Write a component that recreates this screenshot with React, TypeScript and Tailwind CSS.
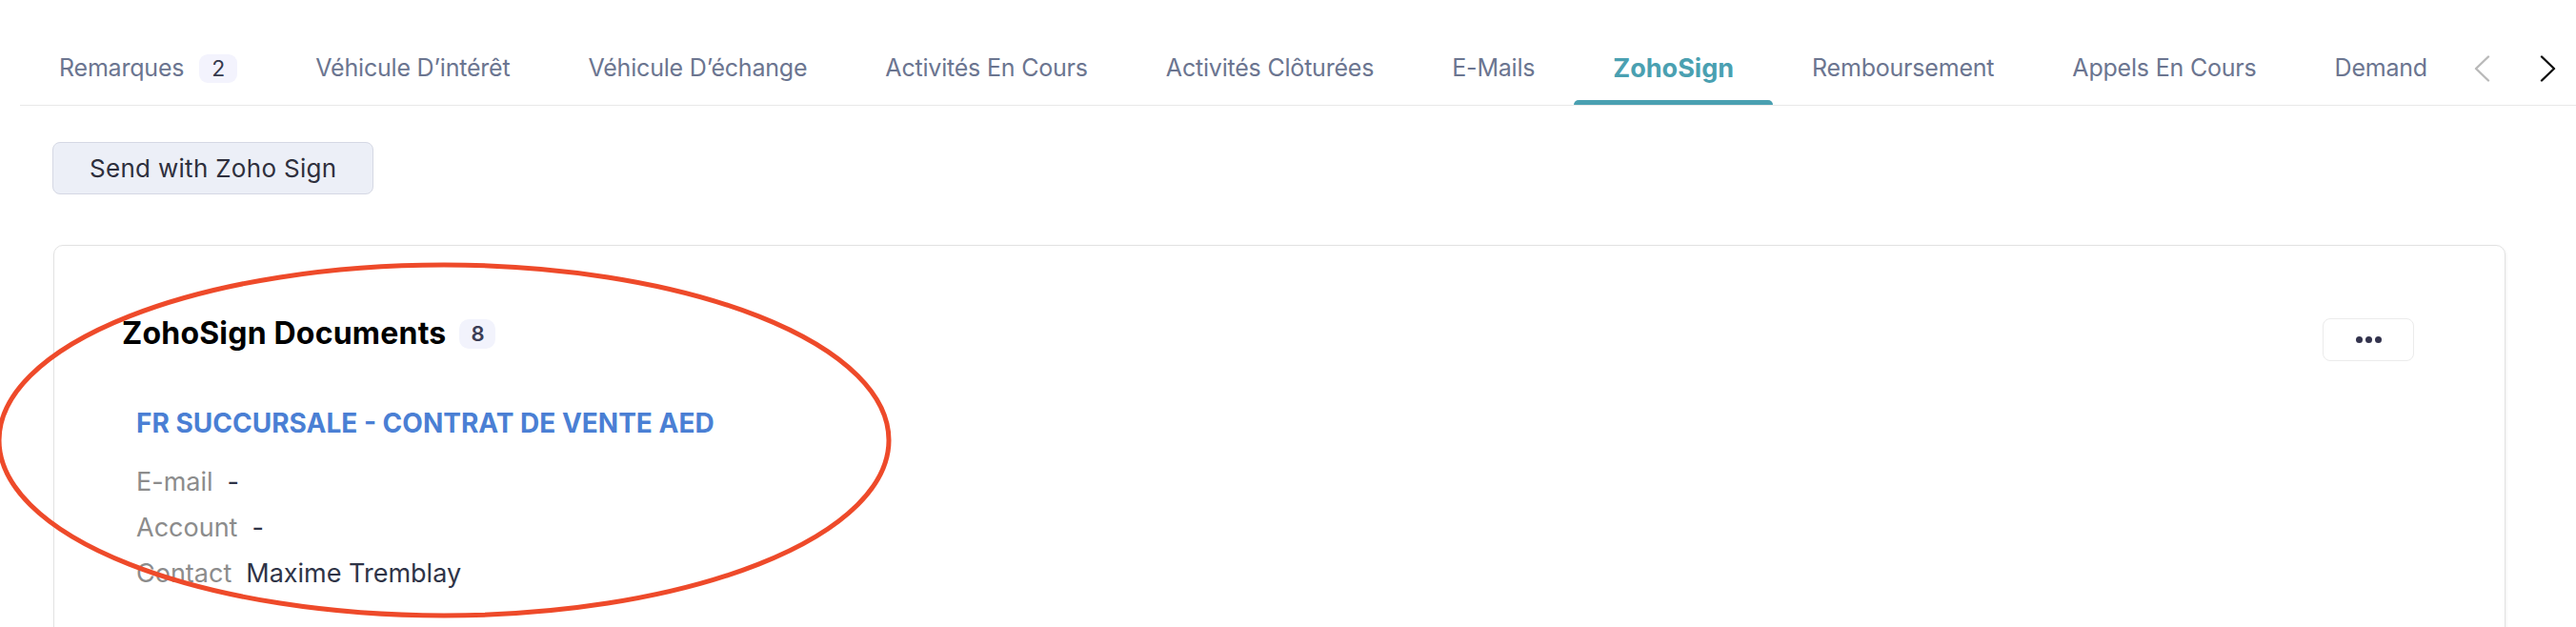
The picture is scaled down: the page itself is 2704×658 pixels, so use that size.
import React from "react";

// onglets de la fiche
const tabs = [
  { label: "Remarques", count: 2 },
  { label: "Véhicule D’intérêt" },
  { label: "Véhicule D’échange" },
  { label: "Activités En Cours" },
  { label: "Activités Clôturées" },
  { label: "E-Mails" },
  { label: "ZohoSign", active: true },
  { label: "Remboursement" },
  { label: "Appels En Cours" },
  { label: "Demand" },
];

const fields = [
  { label: "E-mail", value: "-" },
  { label: "Account", value: "-" },
  { label: "Contact", value: "Maxime Tremblay" },
];

const Chevron = ({ dir, color }: { dir: "left" | "right"; color: string }) => (
  <svg width="18" height="28" viewBox="0 0 18 28" fill="none">
    <polyline
      points={dir === "left" ? "15,1.5 2,14 15,26.5" : "3,1.5 16,14 3,26.5"}
      stroke={color}
      strokeWidth="2.4"
      strokeLinecap="round"
      strokeLinejoin="round"
    />
  </svg>
);

const App: React.FC = () => (
  <div className="relative w-[2704px] h-[658px] overflow-hidden bg-white font-['Inter',sans-serif]">
    {/* barre d'onglets */}
    <div className="ml-[21px] flex h-[111px] border-b border-[#e8e8e8]">
      <div className="flex w-[2532px] flex-none overflow-hidden">
        {tabs.map((t) => (
          <div key={t.label} className="relative flex h-full flex-none items-center px-[41px] pt-[34px]">
            <span
              className={
                t.active
                  ? "text-[27px] font-bold text-[#4aa0b1] whitespace-nowrap"
                  : "text-[25px] tracking-[-0.2px] text-[#6b7590] whitespace-nowrap"
              }
            >
              {t.label}
            </span>
            {t.count !== undefined && (
              <span className="ml-[16px] flex h-[30px] w-[40px] items-center justify-center rounded-[9px] bg-[#f3f3fd] text-[23px] text-[#353a4d]">
                {t.count}
              </span>
            )}
            {t.active && (
              <div className="absolute bottom-0 left-0 right-0 h-[5px] rounded-t-[5px] bg-[#4aa0b1]" />
            )}
          </div>
        ))}
      </div>
      <div className="flex items-center pt-[34px] pl-[44px] gap-[50px]">
        <Chevron dir="left" color="#b9b9b9" />
        <Chevron dir="right" color="#111111" />
      </div>
    </div>

    {/* bouton */}
    <div className="pl-[55px] pt-[38px]">
      <button className="flex h-[55px] items-center rounded-[8px] border border-[#d5d8e4] bg-[#eceff7] px-[38px] text-[26px] tracking-[0.3px] text-[#2e2f3d]">
        Send with Zoho Sign
      </button>
    </div>

    {/* carte documents */}
    <div className="ml-[56px] mt-[53px] h-[500px] w-[2574px] rounded-[10px] border border-[#e2e2e2] shadow-[1px_1px_3px_rgba(0,0,0,0.06)] pl-[71px] pr-[95px] pt-[76px]">
      <div className="flex items-start justify-between">
        <div className="flex h-[32px] items-center">
          <span className="text-[32px] font-bold tracking-[0.2px] text-black">ZohoSign Documents</span>
          <span className="ml-[14px] flex h-[31px] w-[38px] items-center justify-center rounded-[10px] bg-[#f2f3fc] text-[22px] font-semibold text-[#3b3d55]">
            8
          </span>
        </div>
        <button className="flex h-[45px] w-[96px] items-center justify-center gap-[3px] rounded-[8px] border border-[#ebebeb] bg-white">
          <span className="h-[7px] w-[7px] rounded-full bg-[#33334d]" />
          <span className="h-[7px] w-[7px] rounded-full bg-[#33334d]" />
          <span className="h-[7px] w-[7px] rounded-full bg-[#33334d]" />
        </button>
      </div>

      <div className="pl-[15px] pt-[48px]">
        <div className="text-[28px] leading-[34px] font-bold text-[#4a7fd4]">FR SUCCURSALE - CONTRAT DE VENTE AED</div>
        <div className="mt-[21px]">
          {fields.map((f) => (
            <div key={f.label} className="flex h-[48px] items-center gap-[15px] text-[27px]">
              <span className="text-[#8c8c8c]">{f.label}</span>
              <span className="text-[#2f3447]">{f.value}</span>
            </div>
          ))}
        </div>
      </div>
    </div>

    {/* annotation rouge */}
    <svg className="pointer-events-none absolute left-0 top-0" width="2704" height="658">
      <ellipse cx="466" cy="462" rx="467" ry="184" fill="none" stroke="#ee4a2a" strokeWidth="5" />
    </svg>
  </div>
);

export default App;
